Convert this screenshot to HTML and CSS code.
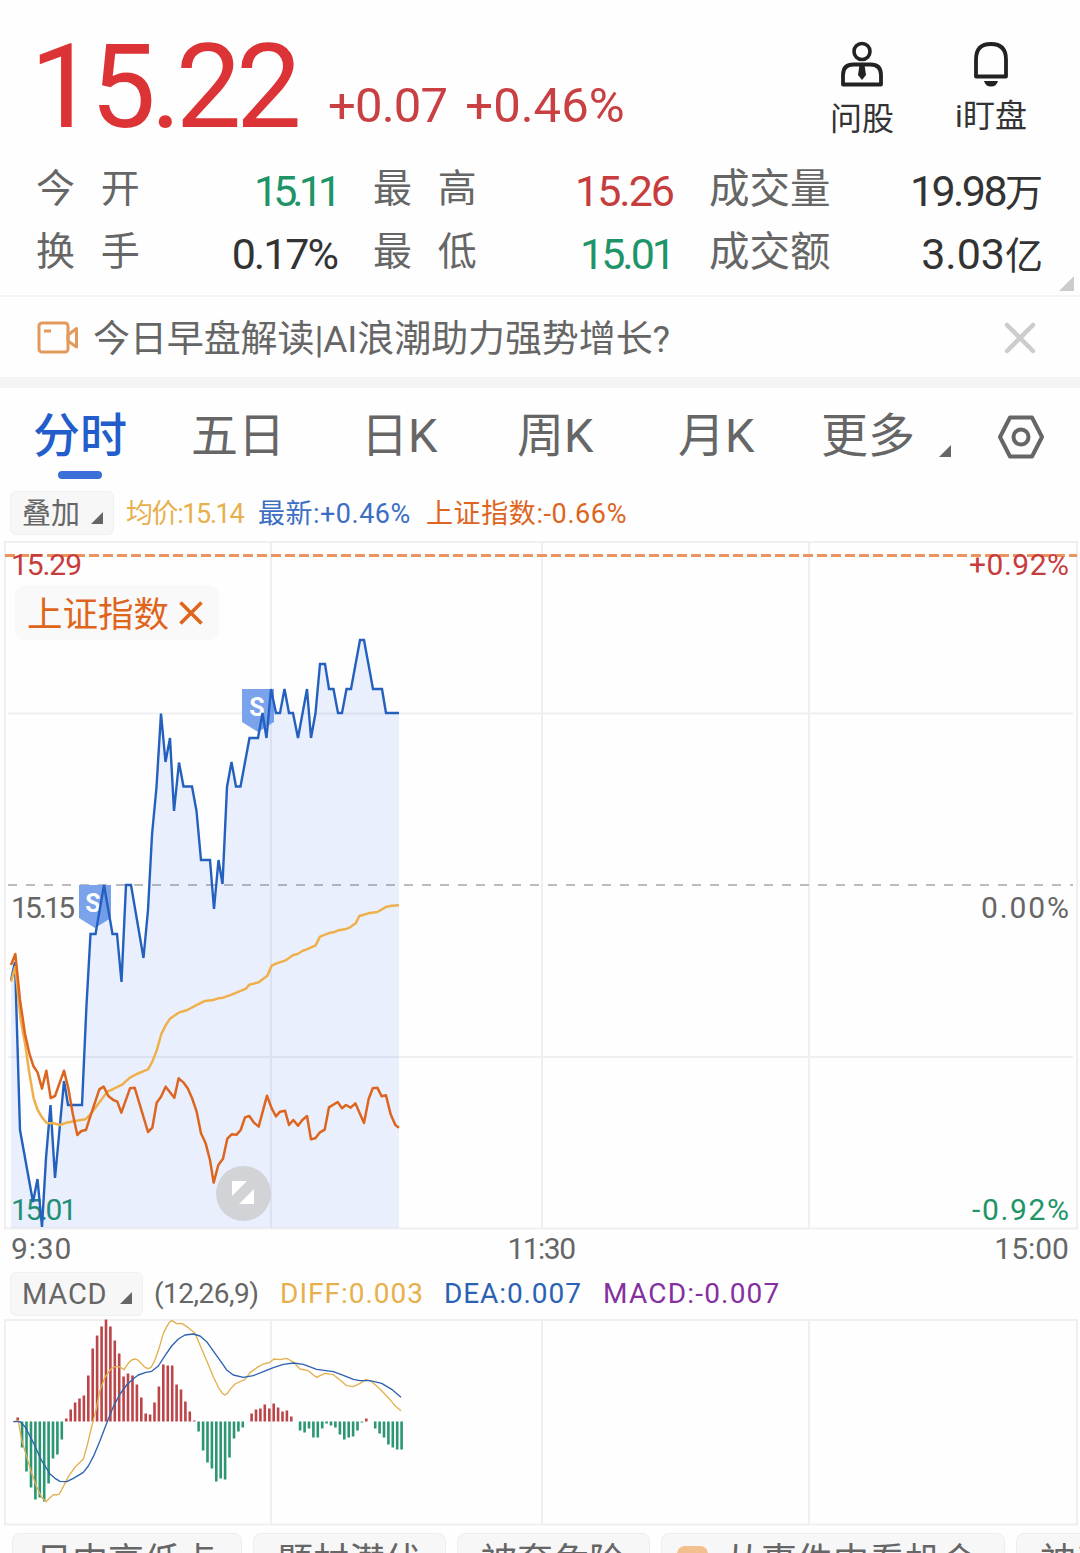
FILE: index.html
```html
<!DOCTYPE html>
<html lang="zh-CN">
<head>
  <meta charset="UTF-8" />
  <meta name="viewport" content="width=device-width, initial-scale=1.0"/>
  <title>分时行情</title>
  <link rel="stylesheet" href="styles.css">
</head>
<body>
  <header class="quote">
    <div class="quote-top">
      <div class="price">15.22</div>
      <div class="change"><span>+0.07</span><span class="percent">+0.46%</span></div>
      <div class="action ask">
        <svg width="44" height="48" viewBox="0 0 44 48">
          <circle cx="22" cy="11.500" r="8" fill="none" stroke="#222" stroke-width="3.600"/>
          <path d="M3 44.500V35Q3 24.500 13.500 24.500H30.500Q41 24.500 41 35V44.500Z" fill="none" stroke="#222" stroke-width="3.800" stroke-linejoin="round"/>
          <path d="M19.500 25H24.500L26 35L22 40L18 35Z" fill="#222"/>
        </svg>
        <span>问股</span>
      </div>
      <div class="action watch">
        <svg width="44" height="48" viewBox="0 0 44 48">
          <path d="M7 36.500V19.500Q7 4 22 4T37 19.500V36.500Z" fill="none" stroke="#222" stroke-width="3.800" stroke-linejoin="round"/>
          <path d="M15 41H29Q27.500 46.500 22 46.500T15 41Z" fill="#222"/>
        </svg>
        <span>i盯盘</span>
      </div>
    </div>
    <div class="stats">
      <div class="stat"><span class="label wide">今 开</span><span class="value green tight">15.11</span></div>
      <div class="stat"><span class="label wide">最 高</span><span class="value red">15.26</span></div>
      <div class="stat"><span class="label">成交量</span><span class="value volume">19.98<small>万</small></span></div>
      <div class="stat"><span class="label wide">换 手</span><span class="value">0.17%</span></div>
      <div class="stat"><span class="label wide">最 低</span><span class="value green low">15.01</span></div>
      <div class="stat"><span class="label">成交额</span><span class="value amount">3.03<small>亿</small></span></div>
    </div>
    <i class="corner"></i>
  </header>

  <div class="news">
    <svg width="42" height="34" viewBox="0 0 42 34">
      <rect x="2" y="2" width="29" height="29" rx="3" fill="none" stroke="#e29a5c" stroke-width="3"/>
      <path d="M7 10H14" stroke="#e29a5c" stroke-width="3"/>
      <path d="M31 14L39.500 7.500V26L31 20Z" fill="none" stroke="#e29a5c" stroke-width="3" stroke-linejoin="round"/>
    </svg>
    <span class="news-title">今日早盘解读|AI浪潮助力强势增长?</span>
    <svg class="close" width="32" height="32" viewBox="0 0 32 32">
      <path d="M3 3L29 29M29 3L3 29" stroke="#ccc" stroke-width="4.500" stroke-linecap="round"/>
    </svg>
  </div>

  <nav class="tabs">
    <span class="tab active">分时</span>
    <span class="tab">五日</span>
    <span class="tab">日K</span>
    <span class="tab">周K</span>
    <span class="tab">月K</span>
    <span class="tab">更多</span>
    <i class="arrow"></i>
    <svg width="46" height="44" viewBox="0 0 46 44">
      <path d="M12 2.500H34L44 22L34 41.500H12L2 22Z" fill="none" stroke="#666" stroke-width="4" stroke-linejoin="round"/>
      <circle cx="23" cy="22" r="7.500" fill="none" stroke="#666" stroke-width="4"/>
    </svg>
  </nav>

  <div class="legend">
    <span class="select overlay">叠加<i class="arrow"></i></span>
    <span class="avg">均价:15.14</span>
    <span class="last">最新:+0.46%</span>
    <span class="index">上证指数:-0.66%</span>
  </div>

  <div class="chart">
    <svg width="1080" height="690" viewBox="0 540 1080 690">
      <g fill="none" stroke="#efeff1" stroke-width="2">
        <rect x="5" y="542" width="1072" height="686.500"/>
        <path d="M271 542V1228M542 542V1228M809 542V1228M8 713.500H1073M8 1057H1073"/>
      </g>
      <path d="M8 885H1073" stroke="#bcbcbc" stroke-width="1.800" stroke-dasharray="9 9"/>
      <path d="M5 555.500H1077" stroke="#ea9460" stroke-width="3" stroke-dasharray="10 4"/>
      <g class="axis">
        <text x="11" y="575" fill="#c73c3c" textLength="71">15.29</text>
        <text x="11" y="918" textLength="64">15.15</text>
        <text x="11" y="1220" fill="#1e9468" textLength="66">15.01</text>
        <text x="969" y="575" fill="#c73c3c" textLength="100">+0.92%</text>
        <text x="981" y="918" textLength="88">0.00%</text>
        <text x="972" y="1220" fill="#1e9468" textLength="97">-0.92%</text>
      </g>
      <g class="badge">
        <path d="M79 885H111V918L95 928L79 918Z"/>
        <text x="93" y="912">S</text>
        <path d="M242 689H274V722L258 732L242 722Z"/>
        <text x="257" y="716">S</text>
      </g>
      <path id="area" fill="#2f6bf0" fill-opacity="0.100"/>
      <polyline id="priceLine" fill="none" stroke="#2460bd" stroke-width="2.400"/>
      <g transform="translate(0 870) scale(0.33333)" fill="none" stroke-width="7.500" stroke-linejoin="round">
        <polyline stroke="#efb04c" points="33,335 46,290 62,450 75,520 88,610 101,685 113,720 126,742 140,759 160,760 180,765 200,758 225,753 256,748 270,735 290,708 322,665 340,657 365,645 390,623 410,612 444,598 457,575 470,542 484,492 497,466 510,446 536,428 562,420 588,406 615,393 640,390 655,385 670,383 695,374 738,356 748,344 776,337 802,317 815,287 830,280 855,272 880,255 893,252 907,243 920,238 947,226 960,200 985,190 1000,187 1015,181 1035,178 1050,172 1067,160 1078,138 1105,130 1132,126 1160,110 1175,107 1197,106"/>
        <polyline stroke="#dd651f" points="33,285 46,252 60,390 75,492 88,550 100,588 113,608 126,656 139,602 152,684 165,678 192,602 205,655 218,730 232,795 244,783 258,780 270,742 298,658 311,650 325,678 340,690 352,695 364,728 390,655 404,653 444,786 457,773 470,698 483,680 497,650 523,683 536,625 550,637 563,655 576,684 590,725 603,790 617,820 630,870 641,938 655,885 669,866 682,806 695,793 710,794 722,780 735,742 748,738 762,758 776,770 801,677 815,715 828,739 840,725 855,722 867,765 880,750 894,767 907,750 921,738 933,808 946,805 960,787 974,779 987,712 1013,696 1026,715 1038,705 1052,713 1066,700 1092,759 1106,687 1118,655 1132,653 1145,679 1158,676 1172,733 1186,765 1197,773"/>
      </g>
    </svg>
    <div class="compare">上证指数
      <svg width="24" height="24" viewBox="0 0 24 24"><path d="M1.500 1.500L22.500 22.500M22.500 1.500L1.500 22.500" stroke="#e0651c" stroke-width="3.600"/></svg>
    </div>
    <div class="expand">
      <svg width="24" height="24" viewBox="0 0 24 24"><path d="M1 0H16L1 15ZM23 8V23H8Z" fill="#fff"/></svg>
    </div>
  </div>

  <div class="times"><span>9:30</span><span>11:30</span><span>15:00</span></div>

  <div class="legend macd">
    <span class="select">MACD<i class="arrow"></i></span>
    <span class="params">(12,26,9)</span>
    <span class="diff">DIFF:0.003</span>
    <span class="dea">DEA:0.007</span>
    <span class="bar">MACD:-0.007</span>
  </div>

  <svg class="macd-chart" width="1080" height="210" viewBox="0 1317 1080 210">
    <g fill="none" stroke="#efeff1" stroke-width="2">
      <rect x="5" y="1320" width="1072" height="204.500"/>
      <path d="M271 1320V1524M542 1320V1524M809 1320V1524"/>
    </g>
    <path id="barsUp" stroke="#bb4549" stroke-width="2.600"/>
    <path id="barsDown" stroke="#2a9672" stroke-width="2.600"/>
    <g transform="translate(0 1260) scale(0.33333)" fill="none" stroke-width="4" stroke-linejoin="round">
      <polyline stroke="#e2b04e" points="40,485 55,482 65,540 80,590 95,640 110,680 125,712 138,725 150,713 160,704 170,705 178,702 190,680 205,650 225,622 250,597 262,555 275,500 288,450 300,390 315,352 330,330 340,322 350,319 360,321 372,329 385,310 395,300 405,297 413,300 420,306 435,322 445,326 453,322 465,300 478,262 490,220 502,197 510,185 516,182 530,191 545,190 565,203 585,220 600,255 620,302 640,350 655,382 668,401 675,405 682,400 690,388 705,372 735,358 750,338 775,320 790,312 808,308 822,297 840,299 860,295 880,306 900,327 925,332 940,345 950,352 962,346 975,340 1000,344 1020,360 1040,377 1060,380 1080,370 1098,358 1115,365 1140,387 1165,413 1185,437 1203,452"/>
      <polyline stroke="#2d62b0" points="40,485 60,485 75,500 100,548 125,602 150,642 165,655 180,664 200,665 220,655 250,637 265,618 280,590 300,542 320,490 340,440 360,402 380,375 400,356 415,345 435,338 455,334 475,318 495,287 515,258 535,237 555,225 580,222 600,228 620,245 645,280 665,308 680,330 700,345 730,352 760,347 790,335 820,323 850,313 880,309 910,313 950,328 1000,335 1030,346 1060,358 1080,362 1110,362 1145,370 1175,388 1203,412"/>
    </g>
  </svg>

  <div class="chips">
    <span class="chip c1">日内高低点</span>
    <span class="chip">题材潜伏</span>
    <span class="chip">被套危险</span>
    <span class="chip c4"><i></i>从事件中看机会</span>
    <span class="chip c5">神奇九转</span>
  </div>

  <script>
    const pricePoints = [
      [11,980],[15,962],[20,1130],[33,1202],[37.5,1179],[42,1227],[46,1158],[50.5,1105],[55,1178],[59.5,1130],
      [64,1081],[68,1105],[82,1105],[86.5,1005],[90.5,934],[95.5,934],[104,885],[112.5,934],[117,934],[121.5,982],
      [126,885],[131,885],[143.5,958],[148,910],[152,835],[156.5,787],[161,713.5],[165.5,762],[170,738],[174,811],
      [179,762.5],[183.5,786.5],[192,786.5],[196.5,811],[201,860],[210,860],[214,909],[218.5,860],[222.5,884],
      [227,787],[231.5,762],[236,786.5],[240.5,786.5],[249.5,738],[258,738],[262.5,713],[266.5,738],[271,689],
      [276,713],[280,713],[284.5,689],[289,713],[293,713],[298,738],[307,689],[311,738],[315.5,713],[320,664],
      [325,664],[329,689],[333.5,689],[338,713],[342,713],[346.5,689],[351,689],[360,640],[364,640],[373,689],
      [382,689],[386,713],[399,713]
    ];
    const line = pricePoints.map(p => p.join(",")).join(" ");
    document.getElementById("priceLine").setAttribute("points", line);
    document.getElementById("area").setAttribute("d", `M11 1228L${line}L399 1228Z`);

    // one bar per minute
    const bars = [
      0,4,-26,-50,-66,-78,-76,-80,-62,-37,-33,-18,3,12,19,23,26,46,73,86,95,102,95,81,68,45,48,46,37,24,8,7,
      19,35,57,56,56,37,32,20,10,1,-10,-29,-41,-47,-60,-57,-58,-36,-17,-10,-6,0,8,12,13,17,13,18,14,10,11,5,
      0,-9,-11,-7,-16,-16,-7,-2,-4,-6,-13,-18,-16,-15,-9,-1,3,0,-7,-12,-16,-23,-26,-28,-28
    ];
    let up = "";
    let down = "";
    bars.forEach((v, i) => {
      const bar = `M${(13.3 + i * 4.413).toFixed(1)} 1421.5v${-v}`;
      if (v > 0) up += bar;
      if (v < 0) down += bar;
    });
    document.getElementById("barsUp").setAttribute("d", up);
    document.getElementById("barsDown").setAttribute("d", down);
  </script>
</body>
</html>
```

FILE: styles.css
```css
* {
  box-sizing: border-box;
}

body {
  font-family: Roboto, "Noto Sans CJK SC", sans-serif;
  margin: 0;
  width: 1080px;
  height: 1553px;
  overflow: hidden;
  background-color: #fefefe;
  color: #666;
  white-space: nowrap;
}

svg {
  display: block;
  flex: none;
}

.red { color: #c73c3c !important; }
.green { color: #1e9468 !important; }

.quote {
  position: relative;
  height: 297px;
  border-bottom: 2px solid #f4f4f4;
}

.quote-top {
  display: flex;
  height: 158px;
  padding-left: 30px;
}

.price {
  width: 298px;
  padding-top: 17px;
  font-size: 117px;
  line-height: 140px;
  letter-spacing: -5.5px;
  color: #dc3337;
}

.change {
  display: flex;
  gap: 18px;
  width: 485px;
  padding-top: 76px;
  font-size: 49px;
  line-height: 60px;
  letter-spacing: -0.8px;
  color: #c94043;
}

.percent { letter-spacing: 0; }

.action {
  display: flex;
  flex-direction: column;
  align-items: center;
  width: 98px;
  padding-top: 40px;
  font-size: 32px;
  line-height: 40px;
  color: #333;
}

.action span { margin-top: 11px; }
.watch { margin-left: 31px; }
.watch span { margin-top: 8px; }

.stats {
  display: grid;
  grid-template-columns: 301px 300px 334px;
  grid-auto-rows: 63px;
  column-gap: 36px;
  padding-left: 36px;
}

.stat {
  display: flex;
  justify-content: space-between;
}

.label {
  font-size: 40.5px;
  line-height: 62px;
}

.wide {
  font-size: 39px;
  word-spacing: 16px;
}

.value {
  font-size: 43px;
  line-height: 67px;
  letter-spacing: -2px;
  color: #333;
}

.value small {
  font-size: 38px;
  letter-spacing: 0;
}

.tight { letter-spacing: -5px; }
.low { letter-spacing: -3px; }
.volume { letter-spacing: -2.6px; }
.amount { letter-spacing: 0; }

.corner {
  position: absolute;
  right: 6px;
  bottom: 4px;
  border-left: 15px solid transparent;
  border-bottom: 15px solid #ccc;
}

.news {
  display: flex;
  align-items: center;
  height: 91px;
  padding: 1px 44px 0 37px;
  border-bottom: 11px solid #f4f4f4;
}

.news-title {
  margin-left: 14px;
  padding-bottom: 3px;
  font-size: 37px;
  letter-spacing: -0.1px;
}

.close { margin-left: auto; }

.tabs {
  display: flex;
  height: 97px;
  padding-left: 33px;
  font-size: 47px;
  line-height: 96px;
}

.tab { width: 165px; }
.tab:nth-child(1) { width: 158px; }
.tab:nth-child(2) { width: 170px; }
.tab:nth-child(3) { width: 156px; }
.tab:nth-child(4) { width: 161px; }
.tab:nth-child(5) { width: 143px; }
.tab:nth-child(6) { width: 118px; }

.active {
  position: relative;
  font-weight: 500;
  color: #225dcb;
}

.active::after {
  content: "";
  position: absolute;
  left: 25px;
  top: 83px;
  width: 44px;
  height: 8px;
  border-radius: 4px;
  background-color: #3a6fd9;
}

.arrow {
  display: inline-block;
  border-left: 12px solid transparent;
  border-bottom: 12px solid #666;
}

.tabs .arrow {
  height: 12px;
  margin-top: 57px;
}

.tabs svg { margin: 27px 0 0 47px; }

.legend {
  display: flex;
  align-items: center;
  height: 55px;
  padding-left: 10px;
  font-size: 28px;
}

.select {
  display: flex;
  align-items: center;
  justify-content: space-between;
  width: 104px;
  height: 44px;
  padding: 0 10px 3px 11px;
  border: 1px solid #f0f0f0;
  border-radius: 6px;
  background-color: #f7f7f7;
  font-size: 29px;
}

.select .arrow { margin-top: 13px; }

.avg,
.last,
.index {
  padding-bottom: 3px;
  font-size: 27px;
}

.avg { width: 132px; margin-left: 12px; letter-spacing: -1.4px; word-spacing: 0; color: #e8b04c; }
.last { width: 168px; letter-spacing: 0.5px; color: #3c6fc4; }
.index { letter-spacing: 0.6px; color: #dd651f; }

.chart {
  position: relative;
  height: 690px;
}

.axis {
  font-size: 30px;
  fill: #666;
}

.badge path { fill: #7aa3eb; }

.badge text {
  font-size: 25px;
  font-weight: 700;
  text-anchor: middle;
  fill: #fff;
}

.compare {
  position: absolute;
  left: 15px;
  top: 45px;
  display: flex;
  align-items: center;
  gap: 10px;
  width: 204px;
  height: 55px;
  padding: 0 0 2px 12px;
  border-radius: 10px;
  background-color: #f9f9f9;
  font-size: 35.5px;
  color: #e0651c;
}

.compare svg { margin-top: 3px; }

.expand {
  position: absolute;
  left: 216px;
  top: 626px;
  width: 55px;
  height: 55px;
  padding: 15px;
  border-radius: 50%;
  background-color: #d2d3d6;
}

.times {
  display: grid;
  grid-template-columns: 1fr 1fr 1fr;
  height: 40px;
  padding: 0 11px;
  font-size: 30px;
  line-height: 38px;
}

.times span:nth-child(1) { letter-spacing: 0.8px; }
.times span:nth-child(2) { padding-left: 2px; text-align: center; letter-spacing: -1.5px; }
.times span:nth-child(3) { text-align: right; }

.macd { height: 47px; }
.macd .select { width: 133px; letter-spacing: 0.8px; padding-bottom: 0; }
.macd .select .arrow { margin-top: 8px; }
.params { width: 126px; margin-left: 11px; letter-spacing: -0.5px; }
.diff { width: 164px; letter-spacing: 1px; color: #e8b04c; }
.dea { width: 159px; letter-spacing: 0.9px; color: #2a62b4; }
.bar { letter-spacing: 1.2px; color: #84309e; }

.chips {
  display: flex;
  gap: 11px;
  margin-top: 6px;
  padding-left: 12px;
  overflow: hidden;
}

.chip {
  flex: none;
  width: 193px;
  height: 60px;
  padding-left: 23px;
  border: 1px solid #eee;
  border-radius: 8px;
  background-color: #f7f7f7;
  font-size: 36px;
  line-height: 56px;
}

.c1 { width: 230px; }

.c4 {
  display: flex;
  width: 344px;
  padding-left: 15px;
}

.c4 i {
  width: 31px;
  height: 30px;
  margin: 12px 17px 0 0;
  border-radius: 8px;
  background-color: #f2c08c;
}
```
